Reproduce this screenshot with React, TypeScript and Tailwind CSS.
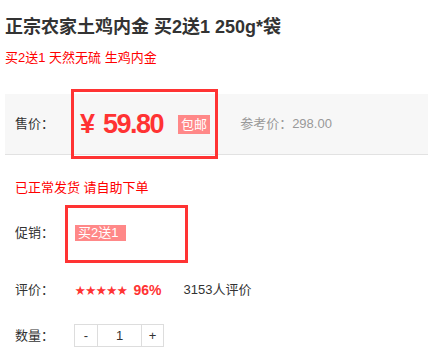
import React, { useState } from 'react';

/* ---------------- ROW LABEL ---------------- */
const Label: React.FC<{ text: string }> = ({ text }) => (
  <span className="w-[60px] shrink-0 text-[13px] text-[#333]">{text}</span>
);

/* ---------------- QUANTITY ---------------- */
const Quantity: React.FC = () => {
  const [qty, setQty] = useState(1);

  return (
    <div className="flex h-[23px] border border-[#ddd] text-[13px] text-[#333]">
      <button
        onClick={() => setQty((q) => Math.max(1, q - 1))}
        className="w-[23px] flex items-center justify-center border-r border-[#ddd]"
      >
        -
      </button>
      <div className="w-[43px] flex items-center justify-center">{qty}</div>
      <button
        onClick={() => setQty((q) => q + 1)}
        className="w-[22px] flex items-center justify-center border-l border-[#ddd]"
      >
        +
      </button>
    </div>
  );
};

export default function App() {
  return (
    <div className="w-[428px] h-[356px] bg-white overflow-hidden font-['Liberation_Sans','Noto_Sans_CJK_SC',sans-serif] text-[#333]">
      {/* TITLE */}
      <h1 className="pl-[5px] pt-[17px] text-[18px] leading-[20px] font-bold text-[#333]">
        正宗农家土鸡内金 买2送1 250g*袋
      </h1>
      <p className="pl-[5px] mt-[11px] text-[13px] leading-[20px] text-[#f00]">
        买2送1 天然无硫 生鸡内金
      </p>

      {/* PRICE BAND */}
      <div className="relative ml-[5px] mt-[26px] h-[61px] bg-[#f7f7f7] border-b border-[#e2e2e2] flex items-center pl-[10px]">
        <Label text="售价：" />
        <div className="flex items-center pl-[5px]">
          <span className="text-[27px] font-bold text-[#f33] leading-none">¥</span>
          <span className="ml-[8px] text-[27px] font-bold text-[#f33] leading-none tracking-[-1.5px]">
            59.80
          </span>
          <span className="ml-[15px] h-[19px] px-[3px] bg-[#f88] text-white text-[13px] leading-[19px]">
            包邮
          </span>
        </div>
        <span className="ml-[30px] text-[13px] text-[#999]">参考价：298.00</span>

        {/* highlight */}
        <div className="absolute left-[66px] top-[-5px] w-[147px] h-[70px] border-[3px] border-[#f33]" />
      </div>

      <p className="pl-[15px] mt-[23px] text-[13px] leading-[20px] text-[#f00]">
        已正常发货 请自助下单
      </p>

      {/* PROMO */}
      <div className="relative mt-[20px] h-[30px] pl-[15px] flex items-center">
        <Label text="促销：" />
        <span className="h-[16px] w-[51px] pl-[3px] bg-[#f88] text-white text-[13px] leading-[16px]">
          买2送1
        </span>

        {/* highlight */}
        <div className="absolute left-[65px] top-[-13px] w-[123px] h-[58px] border-[3px] border-[#f33]" />
      </div>

      {/* RATING */}
      <div className="mt-[27px] h-[30px] pl-[15px] flex items-center">
        <Label text="评价：" />
        <span className="font-['Noto_Sans_CJK_SC',sans-serif] text-[10.5px] text-[#f33]">
          ★★★★★
        </span>
        <span className="ml-[6px] text-[14px] font-bold text-[#f33]">96%</span>
        <span className="ml-[22px] text-[13px] text-[#333]">3153人评价</span>
      </div>

      {/* QUANTITY */}
      <div className="mt-[19px] h-[23px] pl-[15px] flex items-center">
        <span className="w-[59px] shrink-0 text-[13px] text-[#333]">数量：</span>
        <Quantity />
      </div>
    </div>
  );
}
